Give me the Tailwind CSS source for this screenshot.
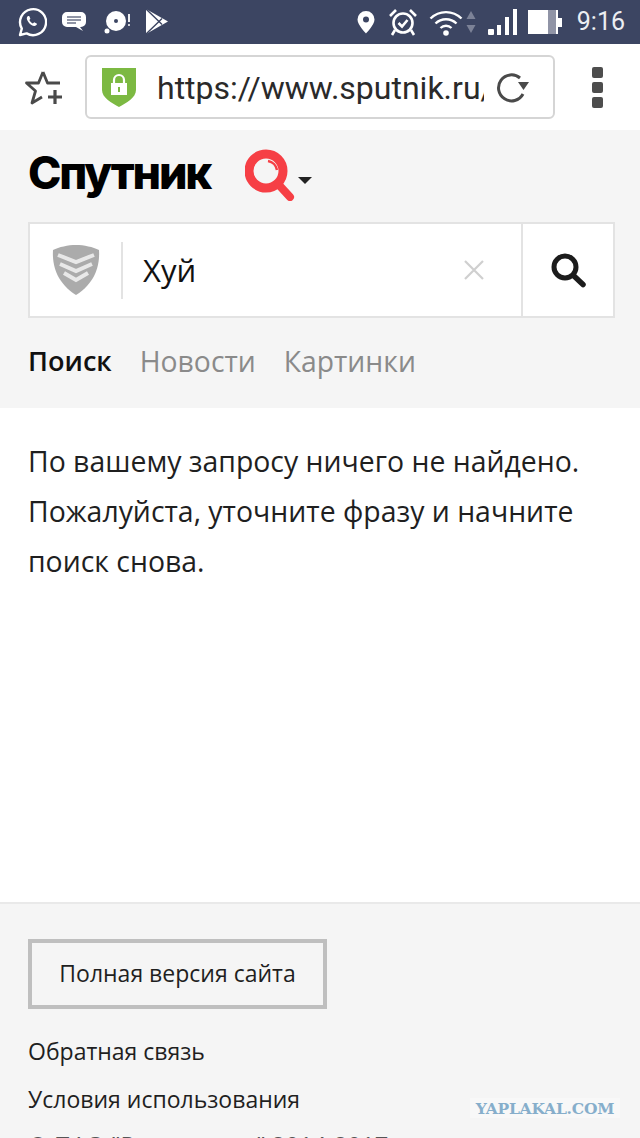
<!DOCTYPE html>
<html lang="ru">
<head>
  <meta charset="UTF-8" />
  <meta name="viewport" content="width=device-width, initial-scale=1.0"/>
  <title>Спутник</title>
  <script src="https://cdn.jsdelivr.net/npm/@tailwindcss/browser@4"></script>
</head>

<body class="relative w-[640px] h-[1138px] overflow-hidden bg-white font-['Open_Sans',sans-serif] text-[#1a1a1a]">

  <!-- Status bar -->
  <div class="h-[44px] bg-[#3c4562] flex items-center pl-[17px] pr-[15px] text-white">
    <svg class="w-[30px] h-[30px]" viewBox="0 0 30 30" fill="none" stroke="white" stroke-width="2.4">
      <path d="M3 28l1.8-6.4A13 13 0 1 1 9.6 26.4z" stroke-linejoin="round"/>
      <path d="M11 9c-1.6 1-1.6 3 0 5.500 1.500 2.500 3.500 4 6 4.500 1.500.2 2.800-.8 3-2.200l-2.800-1.500-1.300 1.200c-1.500-.6-2.800-1.900-3.500-3.500l1-1.300L12.200 9z" fill="white" stroke="none"/>
    </svg>
    <svg class="w-[26px] h-[26px] ml-[14px]" viewBox="0 0 26 26">
      <path d="M6 3h14a5 5 0 0 1 5 5v5a5 5 0 0 1-5 5h-1l3 4-7-4H6a5 5 0 0 1-5-5V8a5 5 0 0 1 5-5z" fill="white"/>
      <path d="M6 8h14M6 11h14M6 14h9" stroke="#6c7389" stroke-width="1.300"/>
    </svg>
    <svg class="w-[30px] h-[30px] ml-[15px]" viewBox="0 0 30 30">
      <circle cx="14" cy="14" r="10" fill="white"/>
      <circle cx="14" cy="14" r="2" fill="#3c4562"/>
      <circle cx="5" cy="24" r="2.500" fill="white"/>
      <path d="M27 7v8" stroke="white" stroke-width="1.800"/><circle cx="27" cy="18" r="1" fill="white"/>
    </svg>
    <svg class="w-[24px] h-[28px] ml-[13px]" viewBox="0 0 24 28">
      <path d="M1 1l22 12.500L1 26z" fill="white"/>
      <path d="M1 1l13 12.500L1 26" fill="none" stroke="#3c4562" stroke-width="1.400"/>
      <path d="M14 13.500l3-3M14 13.500l3 3" stroke="#3c4562" stroke-width="1.400"/>
    </svg>

    <svg class="w-[20px] h-[24px] ml-auto" viewBox="0 0 20 24">
      <path d="M10 1a8.500 8.500 0 0 0-8.500 8.500C1.500 15 10 23.500 10 23.500S18.500 15 18.500 9.500A8.500 8.500 0 0 0 10 1z" fill="white"/>
      <circle cx="10" cy="9.500" r="3" fill="#3c4562"/>
    </svg>
    <svg class="w-[30px] h-[28px] ml-[12px]" viewBox="0 0 30 28" fill="none" stroke="white" stroke-width="2.600">
      <circle cx="15" cy="15" r="9.500"/>
      <path d="M10.500 15l3.500 3.500 5.500-6.500M2 8l6-6M28 8l-6-6M7 22l-3 5M23 22l3 5"/>
    </svg>
    <svg class="w-[34px] h-[27px] ml-[11px]" viewBox="0 0 34 27" fill="none" stroke="white" stroke-width="2.400">
      <path d="M1.500 9.500a22 22 0 0 1 31 0M6.500 14.500a15 15 0 0 1 21 0M11.500 19a8 8 0 0 1 11 0"/>
      <circle cx="17" cy="24" r="2.800" fill="white" stroke="none"/>
    </svg>
    <svg class="w-[10px] h-[24px] ml-[3px]" viewBox="0 0 10 24">
      <path d="M5 1l4.500 8h-9zM5 23L.5 15h9z" fill="#7c8297"/>
    </svg>
    <svg class="w-[30px] h-[26px] ml-[12px]" viewBox="0 0 30 26" fill="white">
      <rect x="0" y="20" width="6" height="6" rx="1"/>
      <rect x="9" y="16" width="4" height="10"/>
      <rect x="17" y="8" width="4" height="18"/>
      <rect x="25" y="0" width="4" height="26"/>
    </svg>
    <div class="ml-[10px] flex items-center">
      <div class="w-[30px] h-[24px] bg-white flex justify-end pr-[2px]"><div class="w-[8px] h-full bg-[#9094a6]"></div></div>
      <div class="w-[4px] h-[9px] bg-white"></div>
    </div>
    <span class="ml-[15px] font-['Roboto',sans-serif] text-[25px] text-[#eceef2]">9:16</span>
  </div>

  <!-- Browser bar -->
  <div class="h-[86px] bg-white flex items-start pl-[24px]">
    <svg class="w-[40px] h-[38px] mt-[25px]" viewBox="0 0 40 38" fill="none" stroke="#4a4a4a" stroke-width="2.800" stroke-linejoin="round">
      <path d="M19 3l-4.500 11H2.500l9 8-3.500 12 10-6M19 3l4.500 11H36" />
      <path d="M31 21v14M24 28h14" stroke-width="3.200"/>
    </svg>
    <div class="ml-[21px] mt-[11px] w-[470px] h-[64px] rounded-[6px] border-2 border-[#d5d5d5] flex items-center pl-[15px] overflow-hidden">
      <svg class="w-[34px] h-[39px] shrink-0" viewBox="0 0 34 39">
        <path d="M0 0h34v22c0 8-10 13-17 17C10 35 0 30 0 22z" fill="#7cb942"/>
        <rect x="9" y="15" width="16" height="12" fill="white"/>
        <path d="M12 15v-3a5 5 0 0 1 10 0v3" fill="none" stroke="white" stroke-width="2.200"/>
        <rect x="16" y="19" width="2" height="5" fill="#7cb942"/>
      </svg>
      <span class="ml-[21px] mt-[2px] font-['Roboto',sans-serif] text-[32px] leading-none text-[#2a2a2a] whitespace-nowrap w-[327px] overflow-hidden">https://www.sputnik.ru/</span>
      <svg class="w-[34px] h-[34px] ml-[12px] shrink-0" viewBox="0 0 34 34" fill="none" stroke="#4a4a4a" stroke-width="3">
        <path d="M27 24a13 13 0 1 1-3-16"/>
        <path d="M22 12h11l-5.500 8z" fill="#4a4a4a" stroke="none"/>
      </svg>
    </div>
    <div class="ml-[37px] mt-[23px] flex flex-col gap-[4px]">
      <div class="w-[11px] h-[11px] rounded-[2px] bg-[#4d4d4d]"></div>
      <div class="w-[11px] h-[11px] rounded-[2px] bg-[#4d4d4d]"></div>
      <div class="w-[11px] h-[11px] rounded-[2px] bg-[#4d4d4d]"></div>
    </div>
  </div>

  <!-- Шапка поиска -->
  <div class="h-[278px] bg-[#f5f5f5] px-[28px]">
    <div class="h-[92px] flex items-start">
      <span class="mt-[15px] w-[185px] font-['Inter',sans-serif] font-extrabold text-[45px] leading-[56px] tracking-[-2.2px] whitespace-nowrap text-black">Спутник</span>
      <svg class="w-[52px] h-[52px] ml-[32px] mt-[19px] shrink-0" viewBox="0 0 52 52" fill="none">
        <circle cx="21" cy="22" r="17" stroke="#f63f45" stroke-width="9"/>
        <path d="M34 36l11 12" stroke="#f63f45" stroke-width="8" stroke-linecap="round"/>
        <path d="M23 12a11 11 0 0 1 9 9" stroke="#f63f45" stroke-width="2.500"/>
      </svg>
      <div class="mt-[47px] ml-[1px] w-0 h-0 border-x-[7px] border-x-transparent border-t-[7px] border-t-[#222]"></div>
    </div>

    <div class="h-[96px] w-[587px] bg-white border-2 border-[#e3e3e3] flex">
      <div class="flex-1 flex items-center relative">
        <svg class="ml-[22px] w-[48px] h-[50px] shrink-0" viewBox="0 0 48 50">
          <path d="M24 0c8 0 17 2 23 5 1 16-4 33-23 45C5 38 0 21 1 5c6-3 15-5 23-5z" fill="#ababab"/>
          <path d="M6 10l18 7 18-7M8 19l16 7 16-7M12 28l12 7 12-7" fill="none" stroke="#e8e8e8" stroke-width="4"/>
        </svg>
        <div class="ml-[21px] w-[2px] h-[57px] bg-[#e3e3e3]"></div>
        <span class="ml-[20px] text-[31px] leading-none text-[#111]">Хуй</span>
        <svg class="absolute right-[37px] top-[36px] w-[20px] h-[20px]" viewBox="0 0 20 20" stroke="#cfcfcf" stroke-width="2.200">
          <path d="M1 1l18 18M19 1L1 19"/>
        </svg>
      </div>
      <div class="w-[92px] border-l-2 border-[#e3e3e3] flex items-center justify-center">
        <svg class="w-[36px] h-[36px]" viewBox="0 0 36 36" fill="none" stroke="#1c1c1c">
          <circle cx="15" cy="15" r="11" stroke-width="5"/>
          <path d="M24 24l9 8.500" stroke-width="5.500" stroke-linecap="round"/>
        </svg>
      </div>
    </div>

    <div class="mt-[24px] flex gap-[28px] text-[28.3px] leading-[38px] text-[#8a8a8a]">
      <span class="font-semibold text-[27.1px] text-[#111]">Поиск</span>
      <span>Новости</span>
      <span>Картинки</span>
    </div>
  </div>

  <!-- Результат -->
  <div class="h-[494px] bg-white px-[28px] pt-[28px] text-[28.4px] leading-[50px] text-[#1f1f1f]">
    <p>По вашему запросу ничего не найдено.<br>Пожалуйста, уточните фразу и начните<br>поиск снова.</p>
  </div>

  <!-- Футер -->
  <div class="h-[236px] bg-[#f5f5f5] border-t-2 border-[#e9e9e9] px-[28px] pt-[35px] text-[23px] text-[#1f1f1f]">
    <div class="w-[299px] h-[70px] border-[4px] border-[#bfbfbf] flex items-center justify-center pb-[2px]">Полная версия сайта</div>
    <div class="mt-[18px] leading-[48px]">
      <p>Обратная связь</p>
      <p>Условия использования</p>
      <p class="-mt-[2px] text-[23.8px] text-[#555]">© ПАО "Ростелеком" 2014-2017</p>
    </div>
  </div>

  <!-- Водяной знак -->
  <div class="absolute left-[470px] top-[1098px] w-[150px] h-[20px] bg-[#f8f8f8] flex items-center justify-center font-['DejaVu_Serif',serif] font-bold text-[15.5px] leading-none pt-[1px] tracking-[-0.2px] text-[#86aecb]">YAPLAKAL.COM</div>

</body>
</html>
